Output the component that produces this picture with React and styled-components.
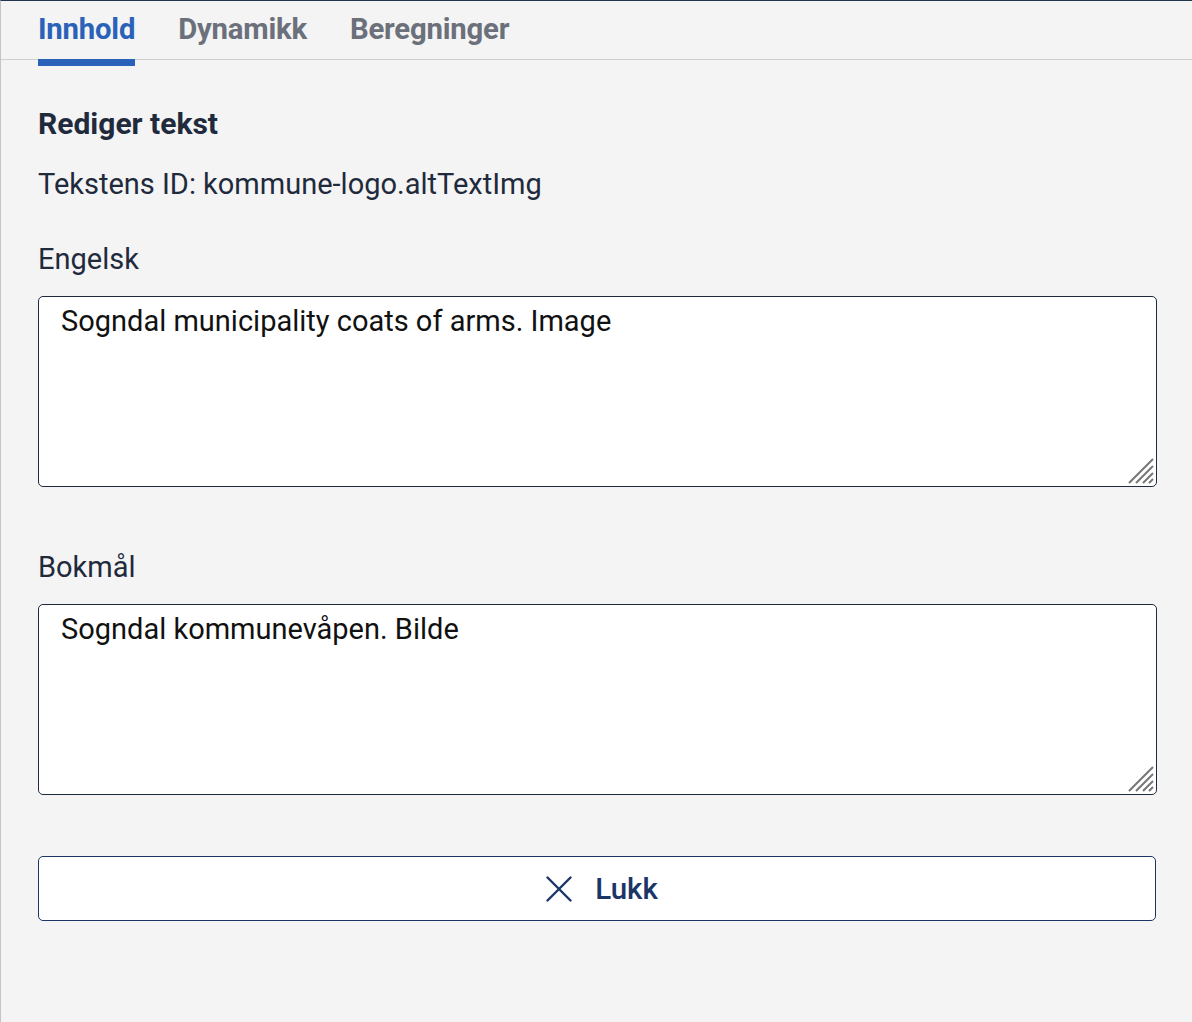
import React from "react";
import styled, { createGlobalStyle } from "styled-components";

const Global = createGlobalStyle`
  html, body { margin: 0; padding: 0; background: #f4f4f4; }
  body { font-family: Roboto, "Liberation Sans", Arial, sans-serif; }
  * { box-sizing: border-box; }
`;

const Panel = styled.div`
  min-height: 1022px;
  background: #f4f4f4;
  border-top: 1px solid #23364f;
  border-left: 1px solid #c4c4c4;
`;

const TabBar = styled.div`
  display: flex;
  gap: 43px;
  height: 59px;
  padding-left: 37px;
  border-bottom: 1px solid #cfcfcf;
`;

const Tab = styled.div`
  position: relative;
  font-size: 29.3px;
  font-weight: 700;
  line-height: 56px;
  color: ${(p) => (p.$active ? "#2a62b9" : "#6b707b")};
  letter-spacing: -0.2px;
  &::after {
    content: "";
    display: ${(p) => (p.$active ? "block" : "none")};
    position: absolute;
    left: 0;
    right: 0;
    bottom: -7px;
    height: 7px;
    background: #2a62b9;
  }
`;

const Content = styled.div`
  padding: 47px 35px 0 37px;
  display: flex;
  flex-direction: column;
`;

const Heading = styled.h2`
  margin: 0;
  font-size: 30px;
  font-weight: 700;
  line-height: 34px;
  color: #1f2a3c;
`;

const Meta = styled.p`
  margin: 26px 0 0;
  font-size: 29px;
  line-height: 34px;
  color: #1f2a3c;
`;

const Label = styled.label`
  display: block;
  margin-top: ${(p) => p.$top}px;
  font-size: 29px;
  line-height: 34px;
  color: #1f2a3c;
`;

const AreaWrap = styled.div`
  position: relative;
  margin-top: 20px;
`;

const Area = styled.textarea`
  display: block;
  width: 100%;
  height: 191px;
  padding: 6px 22px;
  border: 1px solid #1e2b3c;
  border-radius: 5px;
  background: #fff;
  font-family: Roboto, "Liberation Sans", Arial, sans-serif;
  font-size: 29px;
  line-height: 36px;
  color: #111;
  resize: none;
  outline: none;
`;

const Grip = styled.svg`
  position: absolute;
  right: 2px;
  bottom: 2px;
  pointer-events: none;
`;

const CloseButton = styled.button`
  margin-top: 61px;
  width: 1118px;
  height: 65px;
  display: flex;
  align-items: center;
  justify-content: center;
  gap: 23px;
  padding-left: 16px;
  background: #fff;
  border: 1px solid #1b3566;
  border-radius: 5px;
  color: #1b3566;
  font-family: Roboto, "Liberation Sans", Arial, sans-serif;
  font-size: 29.5px;
  font-weight: 500;
  cursor: pointer;
`;

const XIcon = () => (
  <svg width="26" height="26" viewBox="0 0 26 26" fill="none" stroke="#1b3566" strokeWidth="2.4" strokeLinecap="round">
    <path d="M1.5 1.5 L24.5 24.5 M24.5 1.5 L1.5 24.5" />
  </svg>
);

const ResizeGrip = () => (
  <Grip width="28" height="28" viewBox="0 0 28 28" fill="none" stroke="#767676" strokeWidth="2">
    <path d="M2 26 L26 2 M9 26 L26 9 M16 26 L26 16 M22 26 L26 22" />
  </Grip>
);

const TextField = ({ value }) => (
  <AreaWrap>
    <Area defaultValue={value} />
    <ResizeGrip />
  </AreaWrap>
);

export default function App() {
  return (
    <>
      <Global />
      <Panel>
        <TabBar>
          <Tab $active>Innhold</Tab>
          <Tab>Dynamikk</Tab>
          <Tab>Beregninger</Tab>
        </TabBar>
        <Content>
          <Heading>Rediger tekst</Heading>
          <Meta>Tekstens ID: kommune-logo.altTextImg</Meta>
          <Label $top={41}>Engelsk</Label>
          <TextField value="Sogndal municipality coats of arms. Image" />
          <Label $top={63}>Bokmål</Label>
          <TextField value="Sogndal kommunevåpen. Bilde" />
          <CloseButton>
            <XIcon />
            <span>Lukk</span>
          </CloseButton>
        </Content>
      </Panel>
    </>
  );
}
